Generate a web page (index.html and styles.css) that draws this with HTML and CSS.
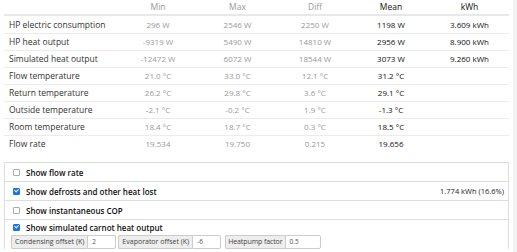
FILE: index.html
```html
<!DOCTYPE html>
<html>
<head>
<meta charset="utf-8">
<link rel="stylesheet" href="styles.css">
</head>
<body>
<div class="page">
  <div class="content">
    <table class="stats">
      <colgroup>
        <col class="c-label"><col class="c-num"><col class="c-max"><col class="c-diff"><col class="c-num"><col class="c-kwh">
      </colgroup>
      <thead>
        <tr><th></th><th class="muted">Min</th><th class="muted">Max</th><th class="muted">Diff</th><th>Mean</th><th>kWh</th></tr>
      </thead>
      <tbody>
        <tr><td class="label">HP electric consumption</td><td class="muted">296 W</td><td class="muted">2546 W</td><td class="muted">2250 W</td><td>1198 W</td><td>3.609 kWh</td></tr>
        <tr><td class="label">HP heat output</td><td class="muted">-9319 W</td><td class="muted">5490 W</td><td class="muted">14810 W</td><td>2956 W</td><td>8.900 kWh</td></tr>
        <tr><td class="label">Simulated heat output</td><td class="muted">-12472 W</td><td class="muted">6072 W</td><td class="muted">18544 W</td><td>3073 W</td><td>9.260 kWh</td></tr>
        <tr><td class="label">Flow temperature</td><td class="muted">21.0 °C</td><td class="muted">33.0 °C</td><td class="muted">12.1 °C</td><td>31.2 °C</td><td></td></tr>
        <tr><td class="label">Return temperature</td><td class="muted">26.2 °C</td><td class="muted">29.8 °C</td><td class="muted">3.6 °C</td><td>29.1 °C</td><td></td></tr>
        <tr><td class="label">Outside temperature</td><td class="muted">-2.1 °C</td><td class="muted">-0.2 °C</td><td class="muted">1.9 °C</td><td>-1.3 °C</td><td></td></tr>
        <tr><td class="label">Room temperature</td><td class="muted">18.4 °C</td><td class="muted">18.7 °C</td><td class="muted">0.3 °C</td><td>18.5 °C</td><td></td></tr>
        <tr><td class="label">Flow rate</td><td class="muted">19.534</td><td class="muted">19.750</td><td class="muted">0.215</td><td>19.656</td><td></td></tr>
      </tbody>
    </table>

    <div class="options">
      <div class="opt"><span class="cb"></span><span class="opt-text">Show flow rate</span></div>
      <div class="opt"><span class="cb checked"></span><span class="opt-text">Show defrosts and other heat lost</span><span class="opt-right">1.774 kWh (16.6%)</span></div>
      <div class="opt"><span class="cb"></span><span class="opt-text">Show instantaneous COP</span></div>
      <div class="opt last">
        <div class="opt-line"><span class="cb checked"></span><span class="opt-text">Show simulated carnot heat output</span></div>
        <div class="fields">
          <div class="field"><span class="addon">Condensing offset (K)</span><span class="inp i-29">2</span></div>
          <div class="field"><span class="addon">Evaporator offset (K)</span><span class="inp i-29">-6</span></div>
          <div class="field"><span class="addon a-hp">Heatpump factor</span><span class="inp i-36">0.5</span></div>
        </div>
      </div>
    </div>
  </div>
  <div class="strip"></div>
</div>
</body>
</html>
```
FILE: styles.css
```css
html, body {
  margin: 0;
  padding: 0;
  background: #fff;
}
body {
  font-family: "Open Sans", "Liberation Sans", sans-serif;
  font-size: 8.5px;
  color: #222;
}
.page {
  display: flex;
  width: 517px;
  height: 252px;
  overflow: hidden;
}
.content {
  width: 505px;
  margin-left: 4px;
}
.strip {
  width: 4px;
  margin-left: auto;
  background: #f2f2f2;
}
.stats {
  width: 505px;
  border-collapse: collapse;
  table-layout: fixed;
}
.c-label { width: 115px; }
.c-num { width: 78px; }
.c-max { width: 81px; }
.c-diff { width: 74px; }
.c-kwh { width: 79px; }
.stats th {
  height: 14px;
  padding: 0;
  font-weight: 500;
  font-size: 8.5px;
  text-align: center;
  vertical-align: top;
  line-height: 13px;
  border-bottom: 2px solid #e8e8e8;
  color: #111;
}
.stats th.muted { font-weight: 400; }
.stats td {
  height: 16px;
  padding: 0;
  text-align: center;
  line-height: 16px;
  border-top: 1px solid #ececec;
  color: #111;
  font-size: 8px;
  white-space: nowrap;
}
.stats tbody tr:first-child td { border-top: none; height: 17px; }
.stats td.label {
  text-align: left;
  padding-left: 5px;
  font-size: 8.5px;
  color: #333;
}
.stats .muted {
  color: #999999;
  font-weight: 400;
}
.options {
  margin-top: 10px;
  border: 1px solid #dddddd;
  border-bottom: none;
}
.opt {
  display: flex;
  align-items: center;
  height: 18px;
  border-bottom: 1px solid #dddddd;
  padding-left: 8px;
  padding-right: 4px;
}
.opt.last {
  display: block;
  height: auto;
  border-bottom: none;
  padding-left: 6px;
}
.opt-line {
  display: flex;
  align-items: center;
  height: 15px;
  padding-left: 2px;
}
.cb {
  width: 5px;
  height: 5px;
  border: 1px solid #aaa;
  border-radius: 1px;
  background: #fff;
  margin-right: 6px;
  flex: none;
  position: relative;
}
.cb.checked {
  background: #1a73e8;
  border-color: #1a73e8;
}
.cb.checked::after {
  content: "";
  position: absolute;
  left: 1px;
  top: -1px;
  width: 2px;
  height: 3px;
  border-right: 1px solid #fff;
  border-bottom: 1px solid #fff;
  transform: rotate(45deg);
}
.opt-text {
  font-size: 8px;
  font-weight: 600;
  color: #111;
}
.opt-right {
  margin-left: auto;
  font-size: 7.5px;
  color: #222;
}
.fields {
  display: flex;
  gap: 2px;
}
.field {
  display: flex;
  height: 14px;
}
.field:nth-child(3) { margin-left: 2px; }
.addon {
  box-sizing: border-box;
  background: #eeeeee;
  border: 1px solid #cccccc;
  border-right: none;
  padding: 0 3px;
  font-size: 7px;
  line-height: 12px;
  color: #444;
  white-space: nowrap;
  border-radius: 2px 0 0 2px;
}
.addon.a-hp { padding: 0 2px; letter-spacing: -0.1px; }
.inp {
  box-sizing: border-box;
  border: 1px solid #cccccc;
  background: #fff;
  padding: 0 4px;
  font-size: 6.5px;
  line-height: 12px;
  color: #555;
  border-radius: 0 2px 2px 0;
}
.i-29 { width: 29px; }
.i-36 { width: 36px; }
```
